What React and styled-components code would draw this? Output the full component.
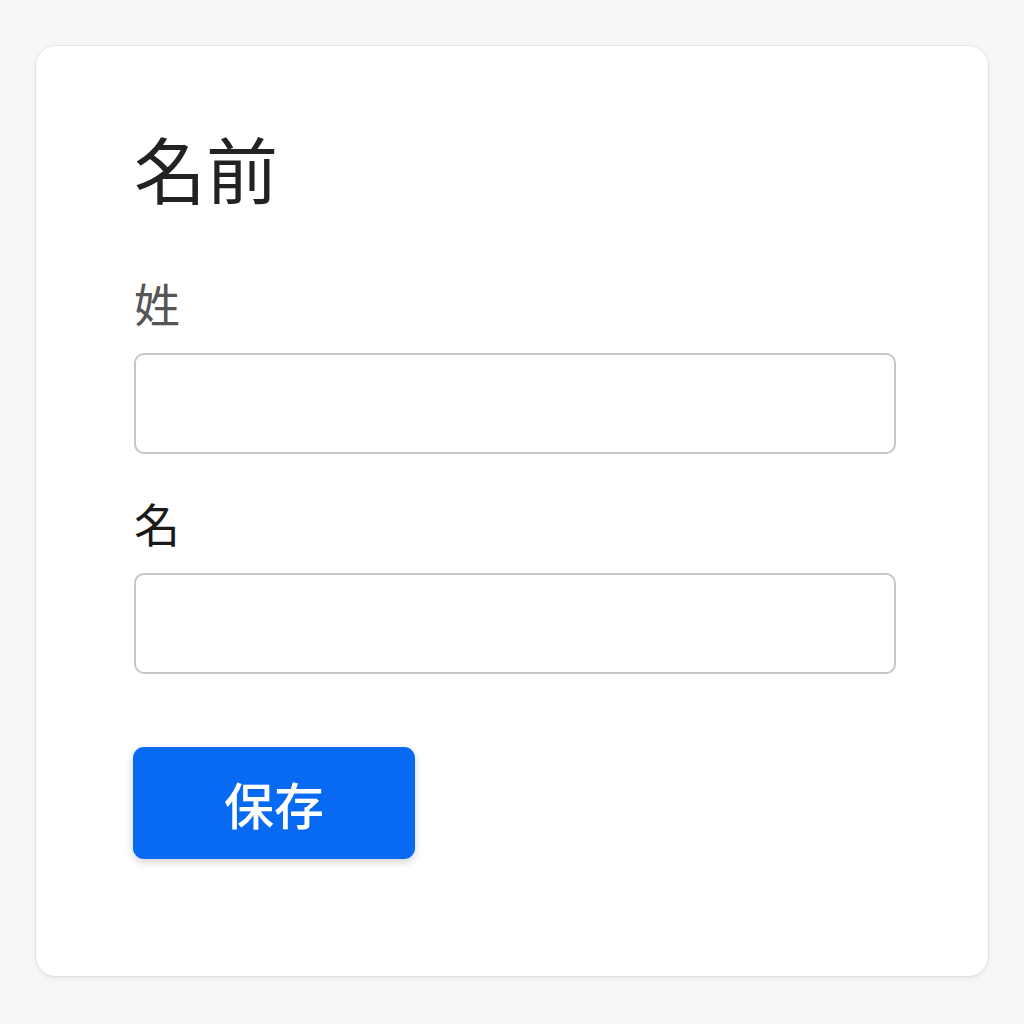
import React from "react";
import styled, { createGlobalStyle } from "styled-components";

const Global = createGlobalStyle`
  html, body { margin: 0; padding: 0; background: #f7f7f7; }
  body { font-family: "Noto Sans CJK JP", "Noto Sans", sans-serif; }
`;

const Page = styled.div`
  padding: 46px 36px 48px 36px;
`;

const Card = styled.form`
  box-sizing: border-box;
  width: 952px;
  height: 930px;
  background: #ffffff;
  border-radius: 20px;
  box-shadow: 0 0 0 1px rgba(0, 0, 0, 0.05), 0 2px 6px rgba(0, 0, 0, 0.08);
  padding: 78px 92px 0 98px;
  display: flex;
  flex-direction: column;
`;

const Title = styled.h1`
  margin: 0 0 65px 0;
  font-size: 72px;
  line-height: 86px;
  font-weight: 400;
  color: #222222;
`;

const Field = styled.div`
  display: flex;
  flex-direction: column;
  margin-bottom: ${(p) => p.$gap}px;
`;

const Label = styled.label`
  font-size: 46px;
  line-height: 54px;
  color: ${(p) => p.$color};
  margin-bottom: 24px;
`;

const Input = styled.input`
  box-sizing: border-box;
  width: 762px;
  height: 101px;
  border: 2px solid #c6c6c6;
  border-radius: 10px;
  background: #fff;
  font-size: 36px;
  padding: 0 20px;
  outline: none;
`;

const Button = styled.button`
  box-sizing: border-box;
  width: 282px;
  height: 112px;
  border: none;
  border-radius: 11px;
  background: #0869f2;
  color: #ffffff;
  font-family: "Noto Sans CJK JP", "Noto Sans", sans-serif;
  font-size: 50px;
  font-weight: 500;
  box-shadow: 0 3px 8px rgba(0, 0, 0, 0.18);
  margin-left: -1px;
  cursor: pointer;
`;

export default function App() {
  return (
    <>
      <Global />
      <Page>
        <Card onSubmit={(e) => e.preventDefault()}>
          <Title>名前</Title>
          <Field $gap={41}>
            <Label $color="#555555">姓</Label>
            <Input type="text" />
          </Field>
          <Field $gap={73}>
            <Label $color="#1a1a1a">名</Label>
            <Input type="text" />
          </Field>
          <Button type="submit">保存</Button>
        </Card>
      </Page>
    </>
  );
}
